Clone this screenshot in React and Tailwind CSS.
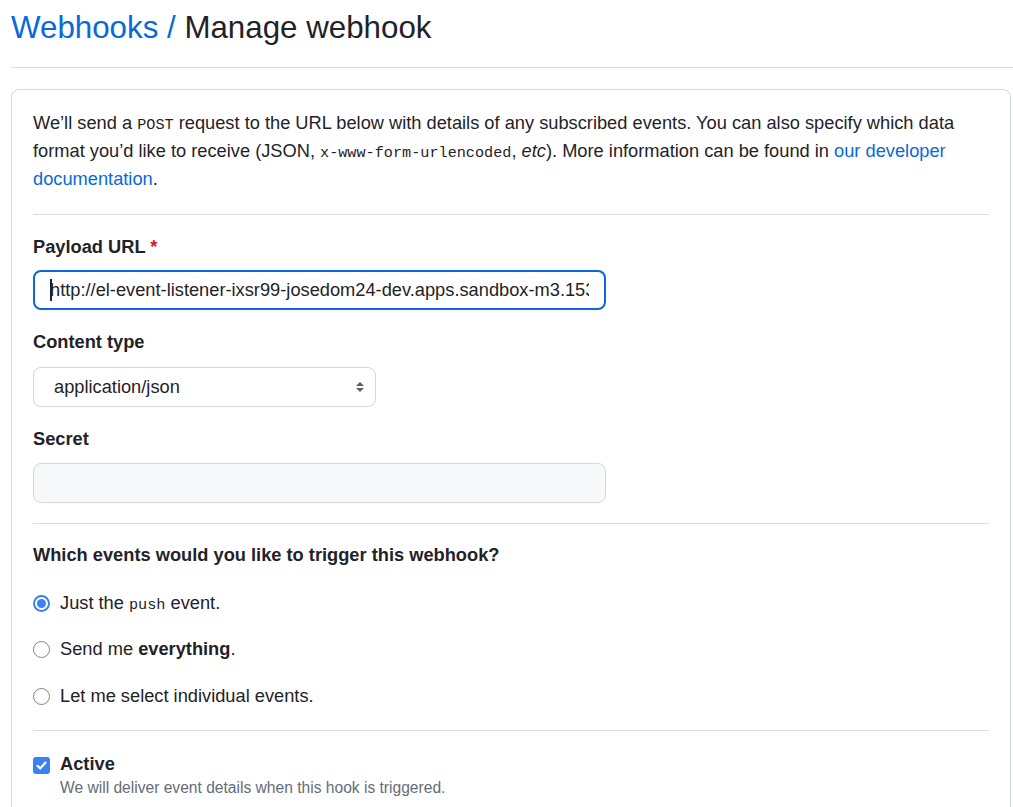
export default function App() {
  const mono = "font-['Liberation_Mono',monospace] text-[15.2px] leading-none";
  return (
    <div className="min-h-screen bg-white pl-[11px] pb-[40px] font-['Liberation_Sans',Arial,sans-serif] text-[#1f2328]">
      <div className="pt-[4px] pb-[15px] border-b border-[#d8dee4] text-[31.3px] leading-[48px]">
        <a className="text-[#0969da]">Webhooks /</a> Manage webhook
      </div>

      <div className="mt-[21px] mr-[2px] border border-[#d0d7de] rounded-[8px] px-[21px] pt-[19px] pb-[40px] text-[18.25px]">
        <p className="leading-[28px]">
          We’ll send a <code className={mono}>POST</code> request to the URL below with details of any subscribed events. You can also specify which data format you’d like to receive (JSON, <code className={mono}>x-www-form-urlencoded</code>, <em>etc</em>). More information can be found in <a className="text-[#0969da]">our developer documentation</a>.
        </p>

        <div className="mt-[21px] border-t border-[#d8dee4]" />

        <div className="mt-[18px] leading-[28px] font-bold">
          Payload URL <span className="text-[#cf222e]">*</span>
        </div>
        <div className="mt-[9px] h-[40px] w-[573px] border-2 border-[#0969da] rounded-[8px] bg-white flex items-center pl-[15px] pr-[15px]">
          <div className="relative flex-1 overflow-hidden whitespace-nowrap leading-[24px]">
            <span className="absolute left-0 top-[1px] h-[22px] w-[1.5px] bg-[#1f2328]" />
            http://el-event-listener-ixsr99-josedom24-dev.apps.sandbox-m3.1530.p1.openshiftapps.com
          </div>
        </div>

        <div className="mt-[18px] leading-[28px] font-bold">Content type</div>
        <div className="mt-[11px] h-[40px] w-[343px] border border-[#d0d7de] rounded-[8px] bg-white flex items-center justify-between pl-[20px] pr-[10px]">
          <span className="leading-[24px]">application/json</span>
          <svg width="10" height="14" viewBox="0 0 10 14">
            <path d="M1 6 L5 2 L9 6 Z" fill="#57606a" />
            <path d="M1 8 L5 12 L9 8 Z" fill="#57606a" />
          </svg>
        </div>

        <div className="mt-[18px] leading-[28px] font-bold">Secret</div>
        <div className="mt-[10px] h-[40px] w-[573px] border border-[#d0d7de] rounded-[8px] bg-[#f6f8fa]" />

        <div className="mt-[20px] border-t border-[#d8dee4]" />

        <div className="mt-[17px] leading-[28px] font-bold">Which events would you like to trigger this webhook?</div>

        <div className="mt-[20px] flex items-center gap-[10px] h-[28px]">
          <span className="w-[17px] h-[17px] rounded-full border-2 border-[#3b82f0] bg-white flex items-center justify-center">
            <span className="w-[9px] h-[9px] rounded-full bg-[#3b82f0]" />
          </span>
          <span className="leading-[28px]">Just the <code className={mono}>push</code> event.</span>
        </div>
        <div className="mt-[18px] flex items-center gap-[10px] h-[28px]">
          <span className="w-[17px] h-[17px] rounded-full border-[1.5px] border-[#858585] bg-white" />
          <span className="leading-[28px]">Send me <b>everything</b>.</span>
        </div>
        <div className="mt-[19px] flex items-center gap-[10px] h-[28px]">
          <span className="w-[17px] h-[17px] rounded-full border-[1.5px] border-[#858585] bg-white" />
          <span className="leading-[28px]">Let me select individual events.</span>
        </div>

        <div className="mt-[20px] border-t border-[#d8dee4]" />

        <div className="mt-[21px] flex items-start gap-[10px]">
          <span className="mt-[5px] w-[17px] h-[17px] rounded-[3px] bg-[#3b82f0] flex items-center justify-center">
            <svg width="13" height="13" viewBox="0 0 13 13">
              <path d="M2.5 6.8 L5.2 9.4 L10.5 3.6" fill="none" stroke="#fff" strokeWidth="2.2" strokeLinecap="round" strokeLinejoin="round" />
            </svg>
          </span>
          <div className="flex flex-col">
            <span className="font-bold leading-[24px]">Active</span>
            <span className="text-[15.6px] leading-[24px] text-[#656d76]">We will deliver event details when this hook is triggered.</span>
          </div>
        </div>
      </div>
    </div>
  );
}
